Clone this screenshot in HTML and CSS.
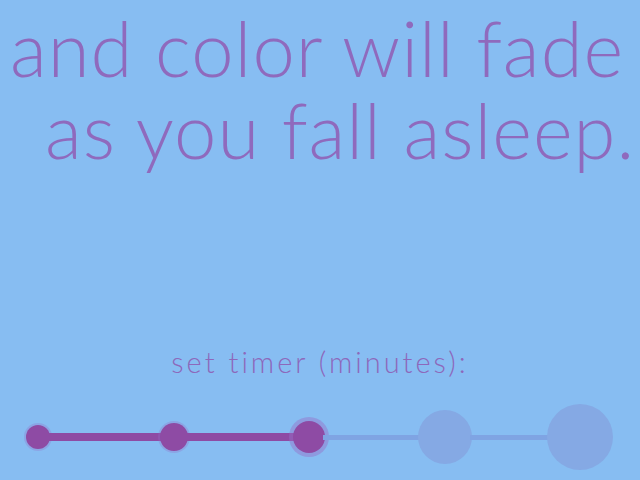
FILE: index.html
```html
<!DOCTYPE html>
<html lang='en'>
<head>
  <meta charset='UTF-8'>
  <meta name='viewport' content='width=device-width,initial-scale=1.0'>
  <title>Sleep Timer</title>
  <link rel="stylesheet" href="styles.css">
</head>
<body>
  <div class='screen'>
    <!-- MESSAGE -->
    <div class='message'>
      <p class='line first'>and color will fade</p>
      <p class='line second'>as you fall asleep.</p>
    </div>

    <!-- TIMER -->
    <div class='timer'>
      <p class='timer-label'>set timer (minutes):</p>
      <div class='track'>
        <span class='dot on s1'></span>
        <span class='bar on w1'></span>
        <span class='dot on s2'></span>
        <span class='bar on w2'></span>
        <span class='dot on current s3'></span>
        <span class='bar w3'></span>
        <span class='dot s4'></span>
        <span class='bar w4'></span>
        <span class='dot s5'></span>
      </div>
    </div>
  </div>
</body>
</html>
```

FILE: styles.css
```css
*{box-sizing:border-box;font-family:Lato,"Open Sans",sans-serif;font-variant-ligatures:none}
html,body{margin:0;padding:0;height:100%;overflow:hidden}
body{background:#87bdf2;color:#8f6abd}
.screen{width:640px;height:480px;display:flex;flex-direction:column}

.message{padding-top:6px}
.line{margin:0;font-size:76px;font-weight:300;letter-spacing:1px;line-height:84px;white-space:nowrap}
.line.first{padding-left:10px}
.line.second{padding-left:45px;margin-top:-2px}

.timer{margin-top:auto;padding-bottom:10px}
.timer-label{margin:0 0 25px;text-align:center;font-size:29px;font-weight:300;letter-spacing:3px;color:#8d68bb}

.track{display:flex;align-items:center;padding-left:26px;height:66px}
.dot{flex:none;border-radius:50%;background:#85a9e4}
.dot.on{background:#8e4ba4;box-shadow:0 0 0 2px rgba(150,110,200,.3)}
.dot.current{box-shadow:0 0 0 4px rgba(150,110,200,.45)}
.s1{width:24px;height:24px}
.s2{width:28px;height:28px}
.s3{width:32px;height:32px}
.s4{width:54px;height:54px}
.s5{width:66px;height:66px}

.bar{flex:none;height:5px;background:#7fa4e3;margin:0 -2px}
.bar.on{height:8px;background:#8e4ba4}
.w1{width:114px}
.w2{width:109px}
.w3{width:97px}
.w4{width:79px}
```
